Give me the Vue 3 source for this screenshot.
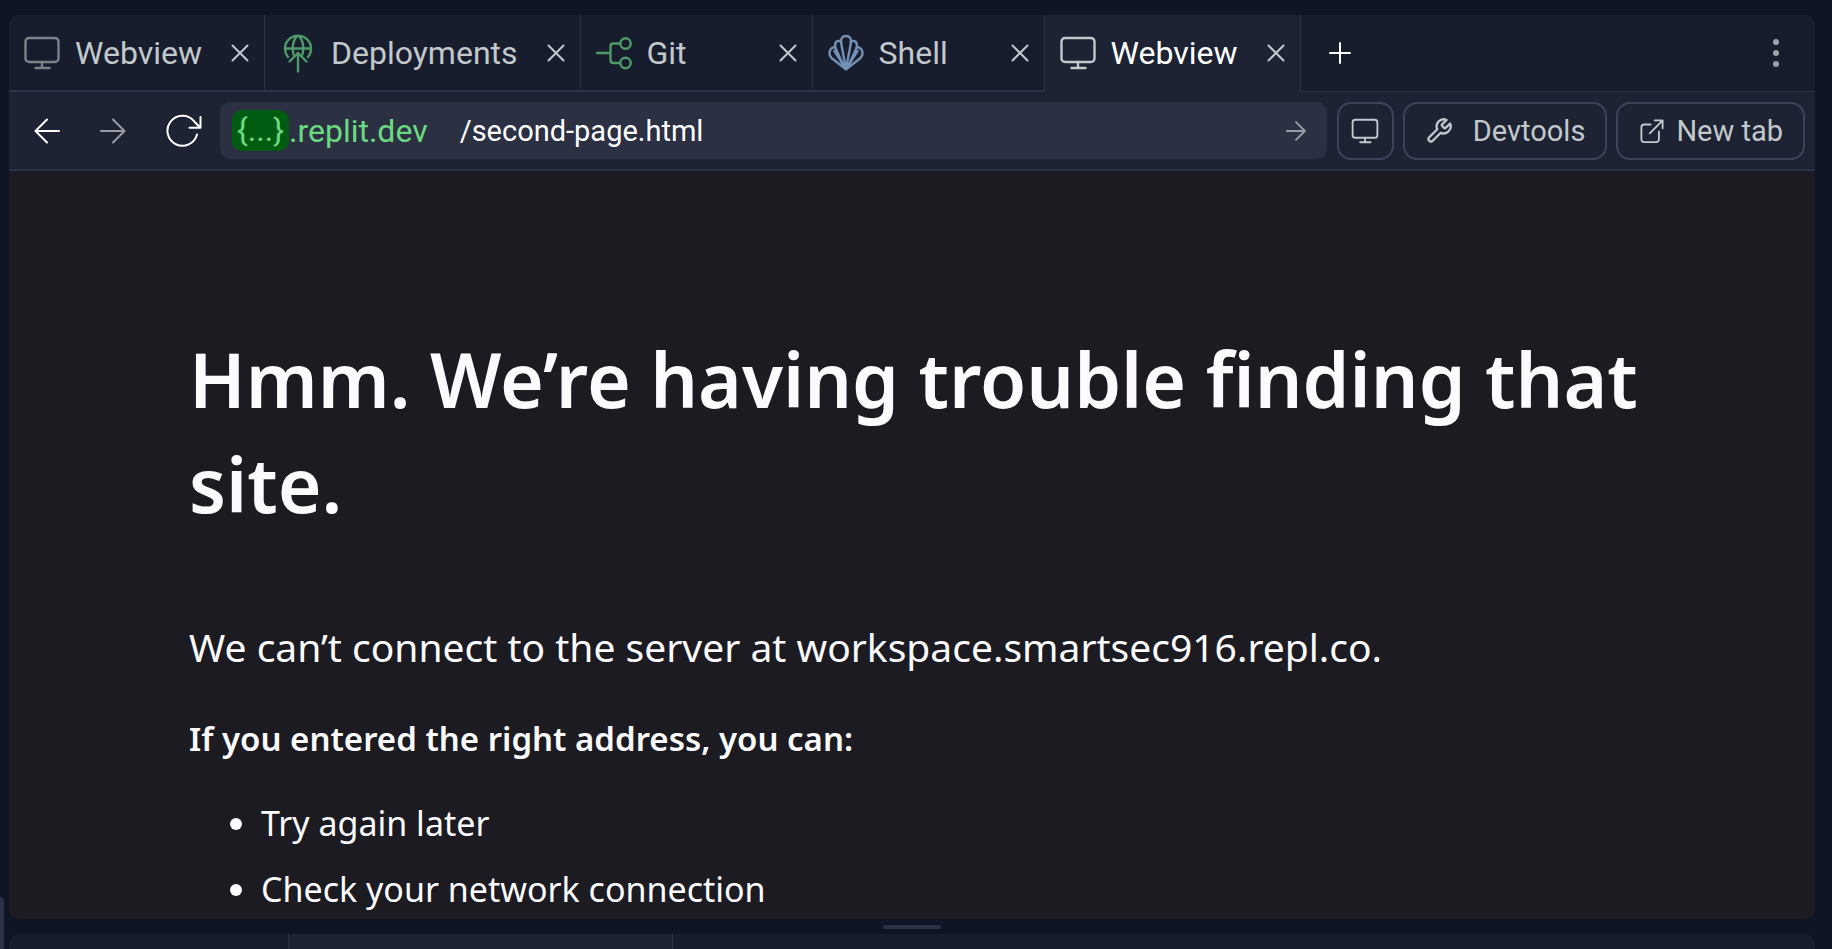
<script setup>
import { ref } from 'vue'

const tabs = [
  { id: 1, title: 'Webview', icon: 'monitor', tone: 'grey' },
  { id: 2, title: 'Deployments', icon: 'deploy', tone: 'green' },
  { id: 3, title: 'Git', icon: 'git', tone: 'green' },
  { id: 4, title: 'Shell', icon: 'shell', tone: 'blue' },
  { id: 5, title: 'Webview', icon: 'monitor', tone: 'light' },
]
const activeTab = ref(5)
const path = ref('/second-page.html')
const tips = ['Try again later', 'Check your network connection']
</script>

<template>
  <svg class="sprite" aria-hidden="true">
    <symbol id="i-monitor" viewBox="0 0 36 40">
      <rect x="1.5" y="5" width="33" height="24" rx="3.5" />
      <path d="M18 29v6M11.500 35h14" />
    </symbol>
    <symbol id="i-deploy" viewBox="0 0 36 40">
      <path d="M8 24A13 13 0 1 1 28 24M5 15.500h26M13.500 21.500C11.500 15 13 6 18 2.500C23 6 24.500 15 22.500 21.500" />
      <path d="M18 38.500V20M9.500 28.500L18 20l8.500 8.500" />
    </symbol>
    <symbol id="i-git" viewBox="0 0 36 40">
      <path d="M1 20h13.500M24 10.500H17.500Q14.500 10.500 14.500 13.500V27Q14.500 30 17.500 30H24" />
      <circle cx="29.500" cy="10.500" r="5.200" />
      <circle cx="29.500" cy="30" r="5.200" />
    </symbol>
    <symbol id="i-shell" viewBox="0 0 36 40">
      <path d="M18 36L13 9.500Q12.500 3 18 3T23 9.500Z" />
      <path d="M16.500 35L7.500 15Q6 9 10 8Q12 7.500 13.500 9" />
      <path d="M19.500 35L28.500 15Q30 9 26 8Q24 7.500 22.500 9" />
      <path d="M17.500 36L3.500 25Q0 21 2.500 16.500Q4.500 13.500 7.200 14.500" />
      <path d="M18.500 36L32.500 25Q36 21 33.500 16.500Q31.500 13.500 28.800 14.500" />
      <path d="M18 36L6.500 18M18 36L29.500 18" />
    </symbol>
    <symbol id="i-close" viewBox="0 0 18 18"><path d="M1.500 1.500l15 15M16.500 1.500l-15 15" /></symbol>
    <symbol id="i-plus" viewBox="0 0 22 22"><path d="M11 1v20M1 11h20" /></symbol>
    <symbol id="i-back" viewBox="0 0 26 26"><path d="M25 13H1.500M13 1.500L1.500 13L13 24.500" /></symbol>
    <symbol id="i-forward" viewBox="0 0 26 26"><path d="M1 13h23.500M13 1.500L24.500 13L13 24.500" /></symbol>
    <symbol id="i-reload" viewBox="0 0 36 34">
      <path d="M31 20.500A15 15 0 1 1 28 7.200L34 13.500M34.500 3v10.700H23.500" />
    </symbol>
    <symbol id="i-wrench" viewBox="0 0 24 24">
      <path d="M14.700 6.300a1 1 0 0 0 0 1.400l1.600 1.600a1 1 0 0 0 1.400 0l3.770-3.770a6 6 0 0 1-7.940 7.940l-6.910 6.910a2.120 2.120 0 0 1-3-3l6.910-6.910a6 6 0 0 1 7.940-7.940l-3.760 3.760z" />
    </symbol>
    <symbol id="i-external" viewBox="0 0 26 26">
      <path d="M20.500 13.500v8.500q0 3-3 3H4.500q-3 0-3-3V9q0-3 3-3H11.500M16 1.500h8.500V10M24 2L10.500 15.500" />
    </symbol>
  </svg>

  <div class="workspace">
    <aside class="rail"><span class="rail-thumb"></span></aside>

    <section class="pane">
      <header class="tabbar">
        <nav class="tabs">
          <div v-for="tab in tabs" :key="tab.id" class="tab" :class="{ active: tab.id === activeTab }">
            <button class="tab-main" type="button" @click="activeTab = tab.id">
              <svg class="tab-icon" :class="tab.tone"><use :href="'#i-' + tab.icon" /></svg>
              <span>{{ tab.title }}</span>
            </button>
            <button class="close" type="button" aria-label="Close tab">
              <svg><use href="#i-close" /></svg>
            </button>
          </div>
        </nav>
        <div class="tab-tools">
          <button class="add" type="button" aria-label="Add tab"><svg><use href="#i-plus" /></svg></button>
          <button class="more" type="button" aria-label="More options"><i></i><i></i><i></i></button>
        </div>
      </header>

      <form class="toolbar" @submit.prevent>
        <div class="history">
          <button type="button" aria-label="Back"><svg class="arrow"><use href="#i-back" /></svg></button>
          <button type="button" aria-label="Forward" class="dim"><svg class="arrow"><use href="#i-forward" /></svg></button>
          <button type="button" aria-label="Reload"><svg class="reload"><use href="#i-reload" /></svg></button>
        </div>
        <div class="address">
          <label class="domain" for="path"><span class="badge">{...}</span>.replit.dev</label>
          <input id="path" v-model="path" type="text" spellcheck="false" />
          <button class="go dim" type="submit" aria-label="Go"><svg><use href="#i-forward" /></svg></button>
        </div>
        <div class="actions">
          <button class="action square" type="button" aria-label="Device size"><svg><use href="#i-monitor" /></svg></button>
          <button class="action devtools" type="button"><svg><use href="#i-wrench" /></svg>Devtools</button>
          <button class="action newtab" type="button"><svg><use href="#i-external" /></svg>New tab</button>
        </div>
      </form>

      <main class="page">
        <h1>Hmm. We’re having trouble finding that site.</h1>
        <p class="lead">We can’t connect to the server at workspace.smartsec916.repl.co.</p>
        <p class="hint">If you entered the right address, you can:</p>
        <ul>
          <li v-for="tip in tips" :key="tip">{{ tip }}</li>
        </ul>
      </main>
    </section>

    <div class="splitter"><span></span></div>

    <section class="lower">
      <span class="lower-tab"></span>
      <span class="lower-tab current"></span>
    </section>
  </div>
</template>

<style>
body {
  background: #0e1525;
}
</style>

<style scoped>
* {
  box-sizing: border-box;
}
button,
input {
  font: inherit;
  color: inherit;
  background: none;
  border: 0;
  padding: 0;
  margin: 0;
}
button {
  display: flex;
  align-items: center;
  justify-content: center;
}
svg {
  display: block;
  flex: none;
  fill: none;
  stroke: currentColor;
  stroke-width: 2;
  stroke-linecap: round;
  stroke-linejoin: round;
}
.sprite {
  position: absolute;
  width: 0;
  height: 0;
}
.workspace {
  height: 100vh;
  padding: 15px 17px 0 0;
  display: grid;
  grid-template-columns: 9px minmax(0, 1fr);
  grid-template-rows: minmax(0, 1fr) 15px 15px;
  background: #0e1525;
  color: #c2c8cc;
  font-family: Roboto, "Noto Sans", sans-serif;
  overflow: hidden;
}
.rail {
  grid-row: 1 / 4;
  display: flex;
  align-items: flex-end;
}
.rail-thumb {
  width: 4px;
  height: 52px;
  background: #2b3245;
  border-top-right-radius: 4px;
}
.pane {
  display: flex;
  flex-direction: column;
  border-radius: 10px;
  overflow: hidden;
  background: #1d2332;
}

.tabbar {
  display: flex;
  flex: none;
  height: 77px;
}
.tabs {
  display: flex;
}
.tab {
  display: flex;
  align-items: center;
  justify-content: space-between;
  gap: 29px;
  min-width: 232px;
  padding: 1px 15px 0;
  background: #171d2d;
  border-right: 1px solid #2b3245;
  border-bottom: 2px solid #2b3245;
  font-size: 32px;
  line-height: 40px;
}
.tab.active {
  background: #1d2332;
  border-bottom-color: #1d2332;
  color: #fff;
}
.tab-main {
  gap: 15px;
}
.tab-icon {
  width: 36px;
  height: 40px;
  stroke-width: 2.400;
}
.grey {
  color: #7d8289;
}
.green {
  color: #4f9a68;
}
.blue {
  color: #7390b5;
}
.light {
  color: #c2c8cc;
}
.close {
  color: #c2c8cc;
}
.close svg {
  width: 18px;
  height: 18px;
}
.tab-tools {
  flex: 1;
  display: flex;
  align-items: center;
  justify-content: space-between;
  padding: 0 36px 0 28px;
  background: #171d2d;
  border-bottom: 1px solid #2b3245;
}
.add {
  color: #fff;
}
.add svg {
  width: 22px;
  height: 22px;
}
.more {
  flex-direction: column;
  gap: 5px;
}
.more i {
  width: 6px;
  height: 6px;
  border-radius: 50%;
  background: #a0a4a9;
}

.toolbar {
  flex: none;
  height: 79px;
  display: flex;
  align-items: center;
  gap: 10px;
  padding: 0 10px 0 25px;
  border-bottom: 2px solid #2b3245;
  font-size: 29px;
  line-height: 40px;
}
.history {
  display: flex;
  gap: 40px;
  padding-right: 8px;
  color: #fff;
}
.arrow {
  width: 26px;
  height: 26px;
}
.reload {
  width: 36px;
  height: 34px;
}
.dim {
  color: #999da3;
}
.address {
  flex: 1;
  min-width: 0;
  height: 57px;
  display: flex;
  align-items: center;
  padding: 0 21px 0 12px;
  border-radius: 10px;
  background: #2b3043;
}
.domain {
  display: flex;
  align-items: center;
  color: #6bd980;
  font-size: 32px;
}
.badge {
  height: 41px;
  padding: 0 5px;
  border-radius: 10px;
  background: #005c10;
}
.address input {
  flex: 1;
  min-width: 0;
  margin-left: 32px;
  color: #fff;
  outline: 0;
}
.go svg {
  width: 20px;
  height: 20px;
  stroke-width: 2.500;
}
.actions {
  display: flex;
  gap: 9px;
}
.action {
  height: 58px;
  border: 2px solid #3c445c;
  border-radius: 14px;
  padding: 0 20px;
  white-space: nowrap;
}
.action svg {
  width: 28px;
  height: 30px;
}
.square {
  width: 57px;
  padding: 0;
}
.square svg {
  stroke-width: 2.500;
}
.devtools {
  gap: 20px;
}
.newtab {
  gap: 12px;
  padding-left: 22px;
}
.newtab svg {
  width: 24px;
  height: 26px;
}

.page {
  flex: 1;
  min-height: 0;
  overflow: hidden;
  padding: 156px 150px 0 180px;
  background: #1c1b22;
  color: #fbfbfe;
  font-family: "Noto Sans", "Open Sans", sans-serif;
}
h1 {
  margin: 0;
  font-size: 75px;
  font-weight: 600;
  line-height: 105px;
}
p {
  margin: 0;
}
.lead {
  margin-top: 82px;
  font-size: 39px;
  line-height: 56px;
}
.hint {
  margin-top: 39px;
  font-size: 33px;
  font-weight: 600;
  line-height: 50px;
}
ul {
  margin: 26px 0 0;
  padding: 0 0 0 72px;
  font-size: 34px;
  line-height: 66px;
}

.splitter {
  display: flex;
  justify-content: center;
  align-items: center;
}
.splitter span {
  width: 58px;
  height: 4px;
  border-radius: 2px;
  background: #2b3245;
}
.lower {
  display: flex;
  overflow: hidden;
  border-radius: 10px 10px 0 0;
  background: #171d2d;
}
.lower-tab {
  width: 280px;
  border-right: 1px solid #2b3245;
}
.lower-tab.current {
  width: 384px;
  background: #1d2332;
}
</style>
